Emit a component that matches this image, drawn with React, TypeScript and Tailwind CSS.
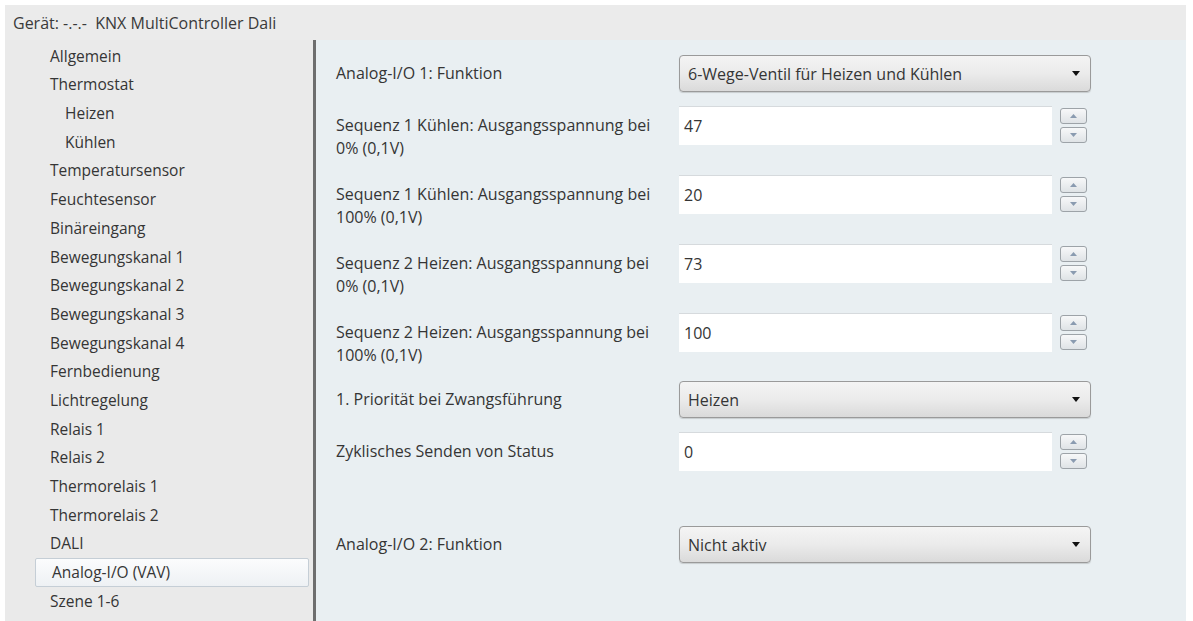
import React from 'react';

const navItems: { label: string; sub?: boolean; active?: boolean }[] = [
  { label: 'Allgemein' },
  { label: 'Thermostat' },
  { label: 'Heizen', sub: true },
  { label: 'Kühlen', sub: true },
  { label: 'Temperatursensor' },
  { label: 'Feuchtesensor' },
  { label: 'Binäreingang' },
  { label: 'Bewegungskanal 1' },
  { label: 'Bewegungskanal 2' },
  { label: 'Bewegungskanal 3' },
  { label: 'Bewegungskanal 4' },
  { label: 'Fernbedienung' },
  { label: 'Lichtregelung' },
  { label: 'Relais 1' },
  { label: 'Relais 2' },
  { label: 'Thermorelais 1' },
  { label: 'Thermorelais 2' },
  { label: 'DALI' },
  { label: 'Analog-I/O (VAV)', active: true },
  { label: 'Szene 1-6' },
];

type Row = { kind: 'select' | 'number'; label: string[]; value: string; height: string };

const rows: Row[] = [
  { kind: 'select', label: ['Analog-I/O 1: Funktion'], value: '6-Wege-Ventil für Heizen und Kühlen', height: 'h-[51px]' },
  { kind: 'number', label: ['Sequenz 1 Kühlen: Ausgangsspannung bei', '0% (0,1V)'], value: '47', height: 'h-[69px]' },
  { kind: 'number', label: ['Sequenz 1 Kühlen: Ausgangsspannung bei', '100% (0,1V)'], value: '20', height: 'h-[69px]' },
  { kind: 'number', label: ['Sequenz 2 Heizen: Ausgangsspannung bei', '0% (0,1V)'], value: '73', height: 'h-[69px]' },
  { kind: 'number', label: ['Sequenz 2 Heizen: Ausgangsspannung bei', '100% (0,1V)'], value: '100', height: 'h-[68px]' },
  { kind: 'select', label: ['1. Priorität bei Zwangsführung'], value: 'Heizen', height: 'h-[51px]' },
  { kind: 'number', label: ['Zyklisches Senden von Status'], value: '0', height: 'h-[94px]' },
  { kind: 'select', label: ['Analog-I/O 2: Funktion'], value: 'Nicht aktiv', height: 'h-[51px]' },
];

const SpinButton = ({ up }: { up?: boolean }) => (
  <div className="w-[27px] h-[16px] rounded-[3px] border border-[#9da3a8] bg-gradient-to-b from-[#f7f8f9] to-[#dfe3e6] flex items-center justify-center">
    <svg width="7" height="4" viewBox="0 0 7 4">
      {up ? <path d="M0 4 L3.5 0 L7 4 Z" fill="#8a9bb0" /> : <path d="M0 0 L3.5 4 L7 0 Z" fill="#8a9bb0" />}
    </svg>
  </div>
);

const Select = ({ value }: { value: string }) => (
  <div className="w-[412px] h-[37px] rounded-[4px] border border-[#9a9a9a] bg-gradient-to-b from-[#f4f4f4] via-[#ebebeb] to-[#dadada] flex items-center justify-between pl-[8px] pr-[10px] shadow-[0_1px_1px_rgba(0,0,0,0.15)]">
    <span>{value}</span>
    <svg width="8" height="5" viewBox="0 0 8 5">
      <path d="M0 0 L4 5 L8 0 Z" fill="#111" />
    </svg>
  </div>
);

const NumberInput = ({ value }: { value: string }) => (
  <div className="flex items-center gap-[8px]">
    <div className="w-[373px] h-[39px] bg-white border-t border-[#d6dadd] flex items-center pl-[5px]">{value}</div>
    <div className="flex flex-col gap-[3px]">
      <SpinButton up />
      <SpinButton />
    </div>
  </div>
);

export default function App() {
  return (
    <div
      className="w-[1193px] h-[621px] bg-white pt-[5px] pl-[5px] pr-[7px] overflow-hidden text-[#353535]"
      style={{ fontFamily: '"Open Sans", "Noto Sans", sans-serif' }}
    >
      <div className="h-full flex flex-col bg-[#ebebeb]">
        {/* Header */}
        <div className="h-[35px] flex items-center pl-[8px] text-[16px] text-[#3a3a3a]">
          Gerät: -.-.-&nbsp;&nbsp;KNX MultiController Dali
        </div>

        <div className="flex flex-1 min-h-0">
          {/* Sidebar */}
          <div className="w-[308px] pt-[2px] bg-[#eaeaea] text-[15.5px]">
            {navItems.map((item) =>
              item.active ? (
                <div
                  key={item.label}
                  className="h-[28.7px] flex items-center ml-[30px] mr-[4px] pl-[16px] border border-[#c5ced6] rounded-[2px] bg-gradient-to-b from-[#fbfcfd] to-[#eef1f4]"
                >
                  {item.label}
                </div>
              ) : (
                <div
                  key={item.label}
                  className={`h-[28.7px] flex items-center ${item.sub ? 'pl-[60px]' : 'pl-[45px]'}`}
                >
                  {item.label}
                </div>
              )
            )}
          </div>

          {/* Separator */}
          <div className="w-[3px] bg-[#6e6e6e]" />

          {/* Parameter panel */}
          <div className="flex-1 bg-[#e9eff2] pt-[15px] pl-[20px] text-[16px]">
            {rows.map((row, i) => (
              <div key={i} className={`flex items-start ${row.height}`}>
                <div className={`w-[343px] leading-[23px] ${row.kind === 'select' ? 'pt-[7px]' : 'pt-[8px]'}`}>
                  {row.label.map((l) => (
                    <div key={l}>{l}</div>
                  ))}
                </div>
                {row.kind === 'select' ? <Select value={row.value} /> : <NumberInput value={row.value} />}
              </div>
            ))}
          </div>
        </div>
      </div>
    </div>
  );
}
